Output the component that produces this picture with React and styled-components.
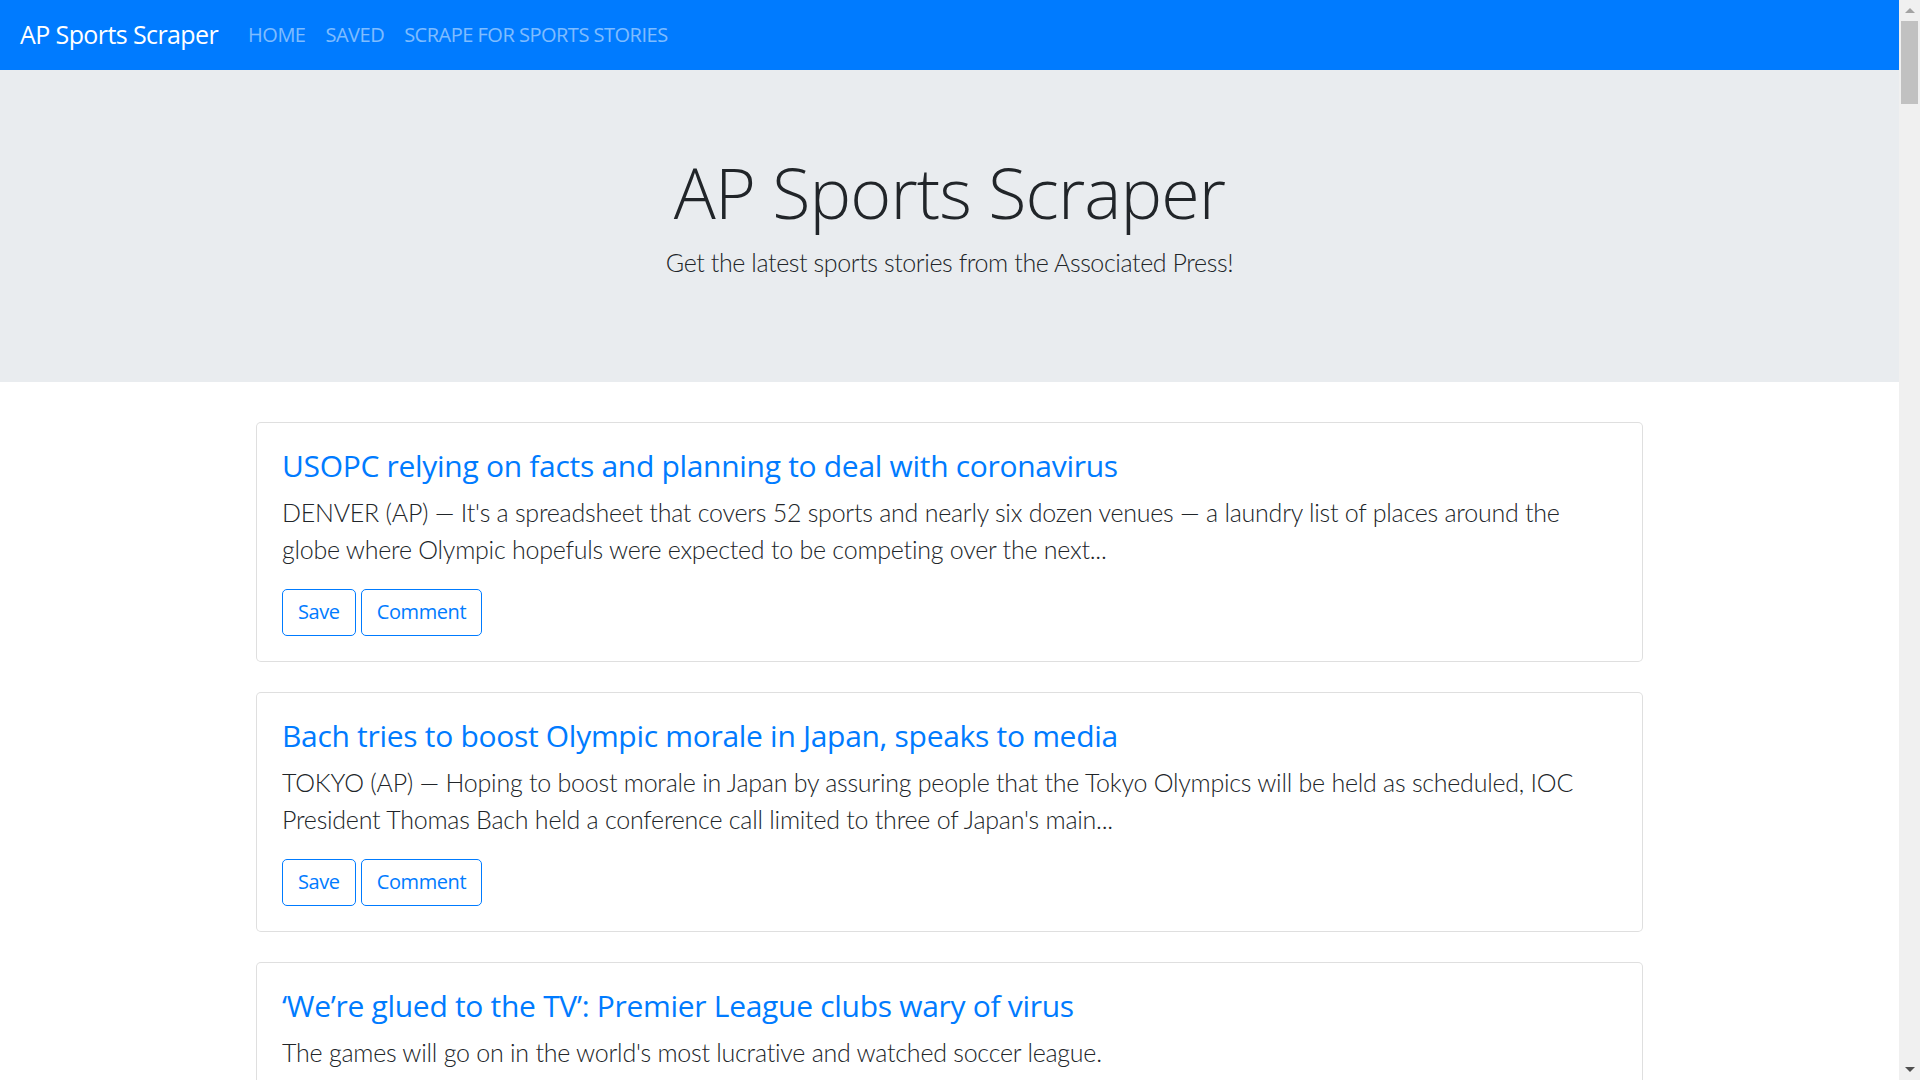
import styled, { createGlobalStyle } from "styled-components";

const GlobalStyle = createGlobalStyle`
	html {
		font-size: 20px;
	}
	body {
		margin: 0;
		font-family: "Open Sans", "Noto Sans", sans-serif;
		font-size: 1rem;
		line-height: 1.5;
		color: #212529;
		background: #fff;
		overflow: hidden;
	}
	* {
		box-sizing: border-box;
	}
`;

const Window = styled.div`
	display: flex;
	height: 100vh;
`;

const Viewport = styled.div`
	flex: 1;
	overflow-y: auto;
	scrollbar-width: none;

	&::-webkit-scrollbar {
		display: none;
	}
`;

const ScrollTrack = styled.div`
	width: 21px;
	flex-shrink: 0;
	display: flex;
	flex-direction: column;
	align-items: center;
	background: #f0f0f0;
`;

const ScrollArrow = styled.div`
	height: 21px;
	width: 100%;
	display: flex;
	align-items: center;
	justify-content: center;
	flex-shrink: 0;

	&::before {
		content: "";
		border-left: 5px solid transparent;
		border-right: 5px solid transparent;
		${(props) =>
			props.direction === "up"
				? "border-bottom: 5px solid #a3a3a3;"
				: "border-top: 5px solid #505050;"}
	}
`;

const ScrollThumb = styled.div`
	width: 17px;
	height: 83px;
	background: #c1c1c1;
`;

const ScrollRest = styled.div`
	flex: 1;
`;

const Navbar = styled.nav`
	height: 70px;
	display: flex;
	align-items: center;
	padding: 10px 20px;
	background-color: #007bff;
`;

const Brand = styled.a`
	font-size: 1.25rem;
	color: #fff;
	margin-right: 20px;
	text-decoration: none;
	white-space: nowrap;
	letter-spacing: -0.6px;
`;

const NavList = styled.div`
	display: flex;
`;

const NavLink = styled.a`
	padding: 0 10px;
	color: rgba(255, 255, 255, 0.5);
	text-transform: uppercase;
	text-decoration: none;
	letter-spacing: -0.5px;
`;

const Jumbotron = styled.header`
	background-color: #e9ecef;
	padding: 80px 40px;
	margin-bottom: 40px;
	text-align: center;
`;

const Display = styled.h1`
	margin: 0 0 10px;
	font-size: 3.5rem;
	font-weight: 300;
	line-height: 1.2;
	letter-spacing: -0.9px;
`;

const Lead = styled.p`
	margin: 0 0 20px;
	font-family: Lato, "Open Sans", sans-serif;
	font-size: 1.25rem;
	font-weight: 300;
	letter-spacing: -0.4px;
`;

const Container = styled.main`
	max-width: 1425px;
	margin: 0 auto;
	padding: 0 19px;
`;

const Card = styled.article`
	border: 1px solid rgba(0, 0, 0, 0.125);
	border-radius: 5px;
	padding: 25px;
	margin-bottom: 30px;
	background: #fff;
`;

const Title = styled.h4`
	margin: 0 0 10px;
	font-size: 1.5rem;
	font-weight: 500;
	line-height: 1.2;
	letter-spacing: -0.3px;

	a {
		color: #007bff;
		text-decoration: none;
	}
`;

const Summary = styled.p`
	margin: 0 0 20px;
	font-family: Lato, "Open Sans", sans-serif;
	font-size: 1.25rem;
	font-weight: 300;
	letter-spacing: -0.24px;
`;

const Actions = styled.div`
	display: flex;
	gap: 5px;
`;

const Button = styled.button`
	font-family: inherit;
	font-size: 1rem;
	line-height: 1.5;
	padding: 7.5px 15px;
	color: #007bff;
	background: transparent;
	border: 1px solid #007bff;
	border-radius: 5px;
	cursor: pointer;
	letter-spacing: -0.4px;
`;

const stories = [
	{
		title: "USOPC relying on facts and planning to deal with coronavirus",
		summary:
			"DENVER (AP) — It's a spreadsheet that covers 52 sports and nearly six dozen venues — a laundry list of places around the globe where Olympic hopefuls were expected to be competing over the next...",
	},
	{
		title: "Bach tries to boost Olympic morale in Japan, speaks to media",
		summary:
			"TOKYO (AP) — Hoping to boost morale in Japan by assuring people that the Tokyo Olympics will be held as scheduled, IOC President Thomas Bach held a conference call limited to three of Japan's main...",
	},
	{
		title: "‘We’re glued to the TV’: Premier League clubs wary of virus",
		summary:
			"The games will go on in the world's most lucrative and watched soccer league.",
	},
];

const App = () => {
	return (
		<>
			<GlobalStyle />
			<Window>
				<Viewport>
					<Navbar>
						<Brand href="#">AP Sports Scraper</Brand>
						<NavList>
							<NavLink href="#">Home</NavLink>
							<NavLink href="#">Saved</NavLink>
							<NavLink href="#">Scrape for sports stories</NavLink>
						</NavList>
					</Navbar>
					<Jumbotron>
						<Display>AP Sports Scraper</Display>
						<Lead>Get the latest sports stories from the Associated Press!</Lead>
					</Jumbotron>
					<Container>
						{stories.map((story) => (
							<Card key={story.title}>
								<Title>
									<a href="#">{story.title}</a>
								</Title>
								<Summary>{story.summary}</Summary>
								<Actions>
									<Button>Save</Button>
									<Button>Comment</Button>
								</Actions>
							</Card>
						))}
					</Container>
				</Viewport>
				<ScrollTrack>
					<ScrollArrow direction="up" />
					<ScrollThumb />
					<ScrollRest />
					<ScrollArrow direction="down" />
				</ScrollTrack>
			</Window>
		</>
	);
};

export default App;
